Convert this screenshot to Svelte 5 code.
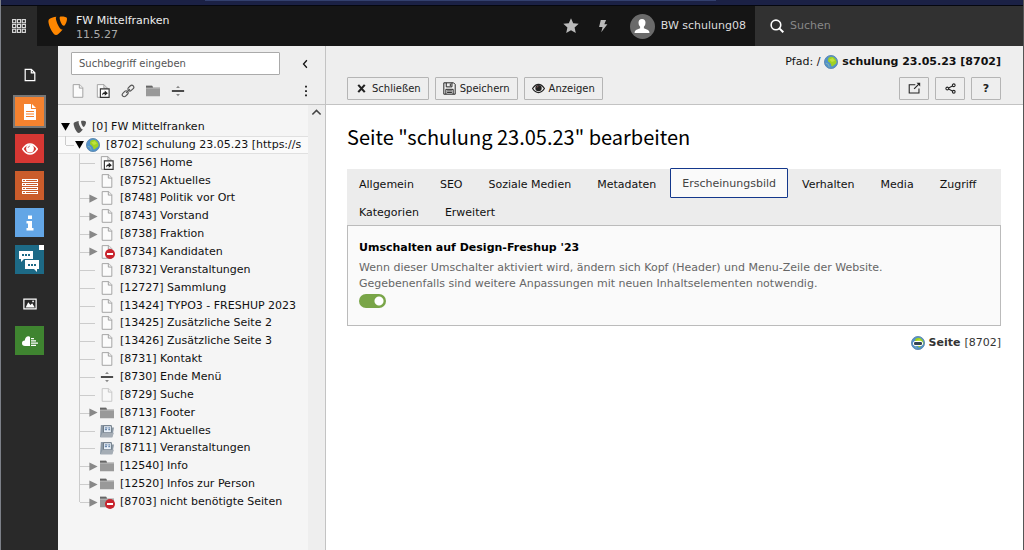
<script>
  const modules = [
    { name: 'file', label: 'Web', kind: 'group' },
    { name: 'page', label: 'Seite', color: '#f5822f', active: true },
    { name: 'eye', label: 'Anzeigen', color: '#d63733' },
    { name: 'list', label: 'Liste', color: '#ca5c2b' },
    { name: 'info', label: 'Info', color: '#63a6e6' },
    { name: 'chat', label: 'Arbeitsumgebungen', color: '#1d6a86' },
    { name: 'image', label: 'Datei', kind: 'group' },
    { name: 'cloud', label: 'Dateiliste', color: '#3f8430' }
  ];

  const nodeTools = [
    { name: 'doc', label: 'Standardseite' },
    { name: 'shortcut', label: 'Verweis' },
    { name: 'link', label: 'Link zu externer URL' },
    { name: 'folder', label: 'Ordner' },
    { name: 'divider', label: 'Trennzeichen' }
  ];

  const tree = [
    { id: 0, title: 'FW Mittelfranken', level: 0, icon: 'typo3', state: 'open' },
    { id: 8702, title: 'schulung 23.05.23 [https://s', level: 1, icon: 'globe', state: 'open', selected: true },
    { id: 8756, title: 'Home', icon: 'shortcut' },
    { id: 8752, title: 'Aktuelles', icon: 'doc' },
    { id: 8748, title: 'Politik vor Ort', icon: 'doc', state: 'closed' },
    { id: 8743, title: 'Vorstand', icon: 'doc', state: 'closed' },
    { id: 8738, title: 'Fraktion', icon: 'doc', state: 'closed' },
    { id: 8734, title: 'Kandidaten', icon: 'doc', state: 'closed', hidden: true },
    { id: 8732, title: 'Veranstaltungen', icon: 'doc' },
    { id: 12727, title: 'Sammlung', icon: 'doc' },
    { id: 13424, title: 'TYPO3 - FRESHUP 2023', icon: 'doc' },
    { id: 13425, title: 'Zusätzliche Seite 2', icon: 'doc' },
    { id: 13426, title: 'Zusätzliche Seite 3', icon: 'doc' },
    { id: 8731, title: 'Kontakt', icon: 'doc' },
    { id: 8730, title: 'Ende Menü', icon: 'divider' },
    { id: 8729, title: 'Suche', icon: 'doc', faded: true },
    { id: 8713, title: 'Footer', icon: 'folder', state: 'closed' },
    { id: 8712, title: 'Aktuelles', icon: 'news' },
    { id: 8711, title: 'Veranstaltungen', icon: 'news' },
    { id: 12540, title: 'Info', icon: 'folder', state: 'closed' },
    { id: 12520, title: 'Infos zur Person', icon: 'folder', state: 'closed' },
    { id: 8703, title: 'nicht benötigte Seiten', icon: 'folder', state: 'closed', hidden: true }
  ];

  const tabs = ['Allgemein', 'SEO', 'Soziale Medien', 'Metadaten', 'Erscheinungsbild', 'Verhalten', 'Media', 'Zugriff', 'Kategorien', 'Erweitert'];
  let activeTab = $state('Erscheinungsbild');
  let freshup = $state(true);
</script>

{#snippet icon(name)}
  <svg class="icon" viewBox="0 0 16 16" aria-hidden="true">
    {#if name === 'file'}
      <path d="M2.5 1.5h7l4 4v9h-11zM9.5 1.5v4h4" fill="none" stroke="currentColor" stroke-width="1.4" />
    {:else if name === 'page'}
      <path d="M2 0h7v5h5v11H2z" fill="#fff" /><path d="M10 0l4 4h-4z" fill="#fff" />
      <path d="M4 7.5h8M4 10h8M4 12.5h8" stroke="#f5822f" />
    {:else if name === 'eye'}
      <path d="M.7 8Q4 3 8 3t7.300 5Q12 13 8 13T.7 8z" fill="none" stroke="currentColor" stroke-width="1.5" />
      <circle cx="8" cy="7.500" r="3.900" fill="currentColor" /><path d="M6 7q.2-1.800 2-2" fill="none" stroke="#a66" stroke-width=".8" />
    {:else if name === 'list'}
      <path d="M0 1h16v3H0zM0 5h16v3H0zM0 9h16v3H0zM0 13h16v3H0z" fill="#fff" />
      <path d="M1 2.500h2M4 2.500h11M1 6.500h2M4 6.500h11M1 10.500h2M4 10.500h11M1 14.500h2M4 14.500h11" stroke="#ca5c2b" />
    {:else if name === 'info'}
      <path d="M6 .5h4v3.500H6zM4.500 6H10v7h1.500v2.500h-7V13H6V8.500H4.500z" fill="#fff" />
    {:else if name === 'image'}
      <path d="M1 2.500h14v11H1z" fill="none" stroke="currentColor" stroke-width="1.400" />
      <path d="M3 12l3-6 2.500 3L10.500 7l3 5z" fill="currentColor" /><circle cx="11.500" cy="5" r="1" fill="currentColor" />
    {:else if name === 'cloud'}
      <path d="M8 13H3Q0 13 0 10.300T2.800 7.500Q3 4 6 3.200 7.500 3 8 4zM9 5h3v1.200H9zM9 7.300h5v1.200H9zM9 9.600h7v1.200H9zM9 11.800h5V13H9z" fill="#fff" />
    {:else if name === 'typo3'}
      <path d="M11.100 10.300c-.2 0-.3.1-.5.1C9 10.400 6.600 4.800 6.600 3c0-.7.2-.9.4-1.100-2 .2-4.300.9-5.100 1.800-.1.2-.3.6-.3 1.100 0 2.800 3 9.200 5.100 9.200 1 0 2.600-1.600 4.400-3.700M10.200 1.700c1.900 0 3.800.3 3.800 1.400 0 2.200-1.400 4.800-2.100 4.800-1.300 0-2.800-3.500-2.800-5.200 0-.8.3-1 1.100-1" fill="currentColor" />
    {:else if name === 'doc'}
      <path d="M2.500.7h7.500l3.500 3.500v11h-11z" fill="#fbfbfb" stroke="#999" /><path d="M9.500.7v4h4" fill="#eee" stroke="#999" />
    {:else if name === 'shortcut'}
      <path d="M1.500.7H9l3.500 3.500v11h-11zM9 .7v4h4" fill="#fbfbfb" stroke="#999" />
      <path d="M5 5.500h10v9.800H5z" fill="#fff" stroke="#333" stroke-width="1.300" />
      <path d="M7 13q0-3.500 3-3.500V7.500l3.500 3-3.500 3v-2q-2 0-3 1.500z" fill="#222" />
    {:else if name === 'link'}
      <g fill="none" stroke="#555" stroke-width="1.300"><rect x="7.500" y="2.500" width="7.500" height="4.500" rx="2.200" transform="rotate(-45 11.200 4.700)" /><rect x="1" y="9" width="7.500" height="4.500" rx="2.200" transform="rotate(-45 4.700 11.200)" /><path d="M5.800 10.200l4.400-4.400" /></g>
    {:else if name === 'folder'}
      <path d="M0 2h7l1 2h8v10H0z" fill="#999" /><path d="M0 2h7l1 2H0z" fill="#666" /><path d="M0 5h16" stroke="#b4b4b4" />
    {:else if name === 'divider'}
      <path d="M1 7h14v2H1z" fill="#333" /><path d="M8 2l2.200 2.600H5.800zM8 14l2.200-2.600H5.800z" fill="#888" />
    {:else if name === 'news'}
      <path d="M1 1h12v3h3l-2 11H0z" fill="#8b98a5" /><path d="M4 2h9v8H4z" fill="#e9f1fa" stroke="#64707c" />
      <path d="M5.500 4.500h3M9.500 4.500h2M5.500 6.500h2.500M9.500 6.500h2" stroke="#345a8a" /><path d="M1 14l2-4h13l-2 5H1z" fill="#a5adb5" />
    {:else if name === 'globe'}
      <circle cx="8" cy="8" r="7.500" fill="#5292cb" stroke="#5b87ae" /><path d="M5 3.500Q8 1 11 2.500q3.500 2 3.500 5.500-.5 2.500-2.500 3l-2.500 2Q8 13 8 10.500L6.500 8.500 4.500 7z" fill="#9fd024" /><path d="M6 5l4-1.500 2.500 3L9 8z" fill="#d5f04b" opacity=".6" /><path d="M2 9.500l3 1 1 3.500" stroke="#86b8ac" fill="none" />
    {:else if name === 'star'}
      <path d="M8 .3l2.200 5 5.500.5-4.100 3.700 1.200 5.500L8 12.200 3.200 15l1.200-5.500L.3 5.800l5.500-.5z" fill="currentColor" />
    {:else if name === 'bolt'}
      <path d="M5.500 1h6L9.500 6H13L6 15l1.500-6H3.500z" fill="currentColor" />
    {:else if name === 'user'}
      <path d="M8 1q3.500 0 3.500 3.800 0 2.700-1.600 4v1.400L14 12q1.500.8 1.500 3H.5q0-2.200 1.500-3l4.100-1.800V8.800Q4.500 7.500 4.500 4.800 4.500 1 8 1z" fill="#fff" />
    {:else if name === 'search'}
      <circle cx="6.800" cy="6.800" r="5.500" fill="none" stroke="currentColor" stroke-width="1.800" /><path d="M11 11l4.200 4.200" stroke="currentColor" stroke-width="2.300" />
    {:else if name === 'grid'}
      {#each [0, 5.5, 11] as gx}{#each [0, 5.5, 11] as gy}<rect x={gx + 0.7} y={gy + 0.7} width="3.600" height="3.600" fill="none" stroke="#ddd" stroke-width="1.300" />{/each}{/each}
    {:else if name === 'close'}
      <path d="M4 3.500l8 9M12 3.500l-8 9" stroke="currentColor" stroke-width="2.600" />
    {:else if name === 'save'}
      <path d="M1 1h12l2 2v12H1z" fill="none" stroke="currentColor" stroke-width="1.200" /><path d="M4 1v5h7V1M9 2v3M3.500 15V9h9v6M5 11h6M5 13h6" fill="none" stroke="currentColor" stroke-width="1.200" />
    {:else if name === 'open'}
      <path d="M9 3.500H1.500v10h12V8" fill="none" stroke="currentColor" stroke-width="1.300" /><path d="M7.500 8.500L14 2" stroke="currentColor" stroke-width="1.400" /><path d="M10.500 1H15v4.500z" fill="currentColor" />
    {:else if name === 'share'}
      <path d="M12 4L4.500 8l7.500 4" fill="none" stroke="currentColor" stroke-width="1.300" /><g fill="#eee" stroke="currentColor" stroke-width="1.300"><circle cx="12" cy="4" r="1.700" /><circle cx="4" cy="8" r="1.700" /><circle cx="12" cy="12" r="1.700" /></g>
    {:else if name === 'left'}
      <path d="M10.500 3L6 8l4.500 5" fill="none" stroke="currentColor" stroke-width="1.700" />
    {:else if name === 'up'}
      <path d="M2 11l6-6 6 6" fill="none" stroke="currentColor" stroke-width="2.200" />
    {:else if name === 'dots'}
      <path d="M7 2h2v2H7zM7 7h2v2H7zM7 12h2v2H7z" fill="currentColor" />
    {:else if name === 'expanded'}
      <path d="M1.500 3h13L8 14z" fill="#000" />
    {:else if name === 'collapsed'}
      <path d="M2 2l12 6-12 6z" fill="#888" />
    {/if}
  </svg>
{/snippet}

<div class="app">
  <div class="strip"><span></span></div>
  <header class="topbar">
    <button class="apps" aria-label="Modulmenü umschalten">{@render icon('grid')}</button>
    <a class="brand" href="#start">
      <span class="logo">{@render icon('typo3')}</span>
      <span class="site">FW Mittelfranken<small>11.5.27</small></span>
    </a>
    <button class="tool star" aria-label="Lesezeichen">{@render icon('star')}</button>
    <button class="tool" aria-label="Cache leeren">{@render icon('bolt')}</button>
    <button class="user"><span class="avatar">{@render icon('user')}</span>BW schulung08</button>
    <label class="search">{@render icon('search')}<input type="search" placeholder="Suchen" aria-label="Suchen" /></label>
  </header>

  <div class="body">
    <nav class="modules" aria-label="Module">
      {#each modules as m}
        {#if m.kind === 'group'}
          <button class="group" aria-label={m.label}>{@render icon(m.name)}</button>
        {:else}
          <button class="module" class:active={m.active} style:--tile={m.color} aria-label={m.label}>
            {#if m.name === 'chat'}
              <svg class="chat" viewBox="0 0 29 29" aria-hidden="true">
                <path d="M4 6h14v8H9l-3 3v-3H4zM10 15h14v9h-2v3l-3-3h-9z" fill="#fff" />
                <path d="M7 9h2v2H7zM10 9h2v2h-2zM13 9h2v2h-2zM13 19h2v2h-2zM16 19h2v2h-2zM19 19h2v2h-2z" fill="#1d6a86" />
                <path d="M24 0h5v5h-5z" fill="#fff" />
              </svg>
            {:else}
              {@render icon(m.name)}
            {/if}
          </button>
        {/if}
      {/each}
    </nav>

    <aside class="pagetree">
      <div class="tree-head">
        <div class="tree-search">
          <input type="text" placeholder="Suchbegriff eingeben" aria-label="Suchbegriff eingeben" />
          <button aria-label="Seitenbaum einklappen">{@render icon('left')}</button>
        </div>
        <div class="tree-tools">
          {#each nodeTools as t}
            <button aria-label={t.label}>{@render icon(t.name)}</button>
          {/each}
          <button class="more" aria-label="Weitere Optionen">{@render icon('dots')}</button>
        </div>
      </div>
      <div class="tree-body">
        <ul class="tree">
          {#each tree as n, i}
            <li class="level{n.level ?? 2}" class:selected={n.selected} class:last={i === tree.length - 1} class:faded={n.faded}>
              <span class="toggle">{#if n.state}{@render icon(n.state === 'open' ? 'expanded' : 'collapsed')}{/if}</span>
              <span class="node {n.icon}">{@render icon(n.icon)}{#if n.hidden}<i class="stop"></i>{/if}</span>
              <span class="title">[{n.id}] {n.title}</span>
            </li>
          {/each}
        </ul>
        <div class="gutter">{@render icon('up')}</div>
      </div>
    </aside>

    <main>
      <div class="dochead">
        <div class="path">Pfad: / <span class="globe">{@render icon('globe')}</span> <strong>schulung 23.05.23 [8702]</strong></div>
        <div class="buttons">
          <button class="btn">{@render icon('close')}Schließen</button>
          <button class="btn">{@render icon('save')}Speichern</button>
          <button class="btn">{@render icon('eye')}Anzeigen</button>
          <span class="spacer"></span>
          <button class="btn square" aria-label="In neuem Fenster öffnen">{@render icon('open')}</button>
          <button class="btn square" aria-label="Teilen">{@render icon('share')}</button>
          <button class="btn square" aria-label="Hilfe"><b>?</b></button>
        </div>
      </div>
      <div class="content">
        <h1>Seite "schulung 23.05.23" bearbeiten</h1>
        <div class="tabs" role="tablist">
          {#each tabs as tab}
            <button role="tab" aria-selected={activeTab === tab} class:current={activeTab === tab} onclick={() => (activeTab = tab)}>{tab}</button>
          {/each}
        </div>
        <section class="panel">
          <label class="field-label" for="freshup">Umschalten auf Design-Freshup '23</label>
          <p>Wenn dieser Umschalter aktiviert wird, ändern sich Kopf (Header) und Menu-Zeile der Website.<br />Gegebenenfalls sind weitere Anpassungen mit neuen Inhaltselementen notwendig.</p>
          <input id="freshup" class="switch" type="checkbox" role="switch" bind:checked={freshup} />
        </section>
        <footer><span class="globe">{@render icon('globe')}<i class="bar"></i></span><strong>Seite</strong> [8702]</footer>
      </div>
    </main>
  </div>
</div>

<style>
  :global(body) { margin: 0; }
  .app {
    box-sizing: border-box;
    min-height: 100vh;
    display: flex;
    flex-direction: column;
    border-left: 1px solid #7c8088;
    border-right: 1px solid #555;
    font: 11px/16px Verdana, "DejaVu Sans", sans-serif;
    color: #111;
    background: #fff;
  }
  .app * { box-sizing: border-box; }
  button, input { font: inherit; color: inherit; margin: 0; }
  button { display: flex; align-items: center; justify-content: center; padding: 0; border: 0; background: none; cursor: pointer; }
  .icon { display: block; width: 14px; height: 14px; flex: none; }

  .strip { height: 6px; background: #1b2145; border-bottom: 1px solid #05070f; }
  .strip span { display: block; width: 50%; height: 1px; margin-left: 20%; background: #33406e; }

  .topbar { display: flex; height: 40px; background: #151515; color: #fff; }
  .apps { width: 36px; background: #292929; }
  .brand { flex: 1; display: flex; align-items: center; gap: 6px; padding-left: 9px; color: #eee; text-decoration: none; }
  .logo { color: #ff8700; }
  .logo .icon { width: 24px; height: 24px; }
  .site { display: flex; flex-direction: column; line-height: 14px; padding-top: 4px; }
  .site small { font-size: 11px; color: #aaa; }
  .tool { width: 32px; color: #bbb; }
  .star .icon { width: 16px; height: 16px; }
  .user { gap: 6px; padding: 0 9px 0 11px; color: #ddd; }
  .avatar { display: flex; align-items: center; justify-content: center; width: 25px; height: 25px; border-radius: 50%; background: #6a6a6a; }
  .avatar .icon { width: 16px; height: 16px; }
  .search { flex: 0 0 268px; display: flex; align-items: center; gap: 6px; padding-left: 15px; background: #313131; }
  .search input { flex: 1; min-width: 0; border: 0; background: none; outline: 0; padding: 0; }
  .search input::placeholder { color: #888; opacity: 1; }

  .body { flex: 1; display: flex; }
  .modules { width: 57px; flex: none; display: flex; flex-direction: column; align-items: center; gap: 8px; padding-top: 15px; background: #292929; color: #fff; }
  .modules .group { width: 29px; height: 28px; }
  .modules .group:not(:first-child) { margin-top: 8px; }
  .module { width: 29px; height: 29px; background: var(--tile); color: #fff; }
  .module.active { outline: 2px solid #777; }
  .module .icon { width: 16px; height: 16px; }
  .chat { width: 29px; height: 29px; }

  .pagetree { width: 268px; flex: none; display: flex; flex-direction: column; background: #f5f5f5; border-right: 1px solid #c3c3c3; }
  .tree-head { height: 59px; padding: 6px 0 0 13px; background: #eee; border-bottom: 1px solid #c3c3c3; }
  .tree-search, .tree-tools { display: flex; align-items: center; }
  .tree-search input { width: 209px; height: 23px; padding: 0 7px; font-size: 10px; border: 1px solid #aaa; background: #fff; border-radius: 1px; }
  .tree-search input::placeholder { color: #555; opacity: 1; }
  .tree-search button { width: 24px; margin-left: 13px; }
  .tree-search .icon { width: 12px; height: 12px; }
  .tree-tools { height: 31px; gap: 11px; padding-right: 12px; }
  .tree-tools .more { margin-left: auto; }

  .tree-body { flex: 1; display: flex; align-items: flex-start; min-width: 0; }
  .tree { flex: 1; min-width: 0; min-height: 393px; margin: 0; padding: 13px 0 0; display: grid; grid-auto-rows: 1fr; list-style: none; box-sizing: content-box; }
  .tree li { position: relative; display: flex; align-items: center; overflow: hidden; white-space: nowrap; min-height: 17px; }
  .level0 { padding-left: 1px; }
  .level1 { padding-left: 15px; }
  .level2 { padding-left: 29px; }
  .toggle { width: 12px; flex: none; display: flex; justify-content: center; position: relative; z-index: 1; }
  .toggle .icon { width: 11px; height: 11px; }
  .node { position: relative; flex: none; margin: 0 6px 0 1px; color: #555; }
  .node.typo3 { margin: 0 4px 0 1px; }
  .node.typo3 .icon { width: 16px; height: 16px; }
  .faded .node { opacity: .55; }
  .selected { background: #fafafa; box-shadow: inset 0 1px #e0e0e0, inset 0 -1px #e0e0e0; }
  .level1::before, .level2::before { content: ''; position: absolute; top: 0; bottom: 0; left: 21px; border-left: 1px solid #ccc; }
  .level1::before { left: 7px; bottom: 50%; }
  .level2.last::before { bottom: 50%; }
  .level1::after, .level2::after { content: ''; position: absolute; top: 50%; left: 22px; width: 15px; border-top: 1px solid #ccc; }
  .level1::after { left: 8px; width: 8px; }
  .stop { position: absolute; right: -1px; bottom: 0; width: 10px; height: 10px; border-radius: 50%; background: linear-gradient(#fff, #fff) center / 6px 2px no-repeat #c8232c; }
  .gutter { width: 17px; align-self: stretch; display: flex; justify-content: center; padding-top: 2px; background: #eee; color: #444; }
  .gutter .icon { width: 11px; height: 11px; }

  main { flex: 1; min-width: 0; }
  .dochead { height: 59px; padding: 8px 22px 0 21px; background: #eee; border-bottom: 1px solid #c3c3c3; }
  .path { display: flex; justify-content: flex-end; align-items: center; gap: 4px; height: 16px; }
  .buttons { display: flex; gap: 6px; margin-top: 7px; }
  .btn { height: 23px; gap: 4px; padding: 0 7px; font-size: 10px; color: #222; border: 1px solid #b5b5b5; background: #eee; border-radius: 1px; }
  .btn .icon { width: 13px; height: 13px; }
  .spacer { flex: 1; }
  .square { width: 30px; padding: 0; font-size: 11px; }
  .content { padding: 19px 22px 20px 21px; }
  h1 { margin: 0; font: 400 20px/26px "Source Sans Pro", "Noto Sans CJK SC", sans-serif; color: #000; }
  .tabs { display: flex; flex-wrap: wrap; column-gap: 2px; margin-top: 19px; background: #ececec; }
  .tabs button { height: 28px; padding: 3px 12px 0; }
  .tabs .current { height: 30px; margin: -1px 0; padding-top: 2px; background: #fafafa; outline: 1px solid #14388c; outline-offset: -1px; border-radius: 1px; color: #444; }
  .panel { padding: 14px 11px 17px; border: 1px solid #bbb; background: #fafafa; }
  .field-label { display: block; font-weight: bold; color: #000; }
  .panel p { margin: 4px 0 2px; color: #666; }
  .switch { appearance: none; display: block; width: 27px; height: 14px; border-radius: 7px; background: radial-gradient(circle at 7px 7px, #fff 4px, transparent 5px) #999; cursor: pointer; }
  .switch:checked { background: radial-gradient(circle at 20px 7px, #fff 4px, transparent 5px) #79a548; }
  footer { display: flex; justify-content: flex-end; align-items: center; gap: 4px; margin-top: 9px; color: #333; }
  .globe { position: relative; }
  .bar { position: absolute; left: 2px; top: 5px; width: 10px; height: 5px; border: 1px solid #fff; border-radius: 2px; background: #345; }
</style>
